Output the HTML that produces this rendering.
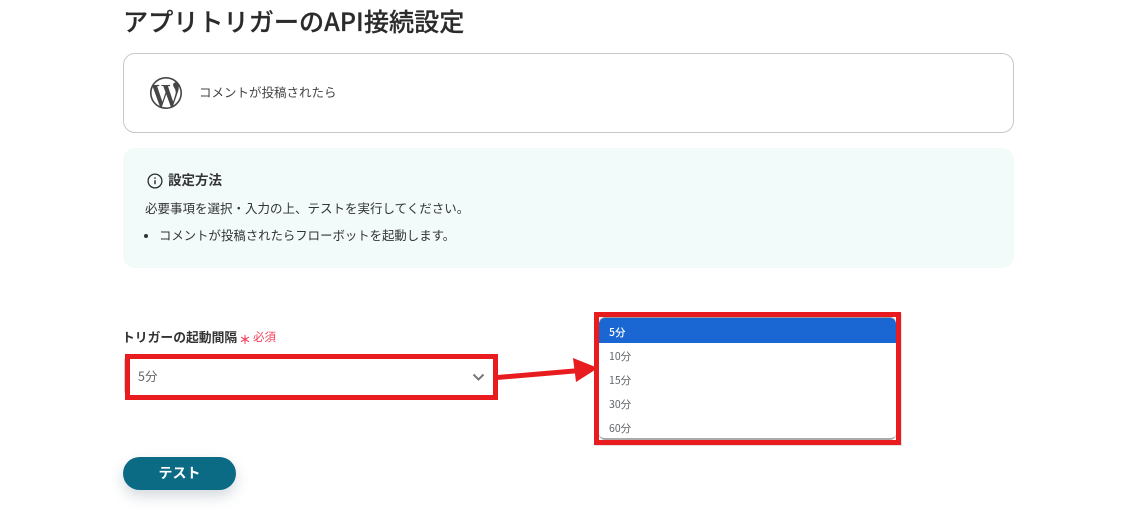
<!DOCTYPE html>
<html lang="ja">
<head>
<meta charset="utf-8">
<style>
html,body{margin:0;padding:0;background:#fff;}
body{width:1126px;height:516px;position:relative;overflow:hidden;font-family:"Liberation Sans","Noto Sans CJK JP",sans-serif;color:#2d2d2d;}
.t{position:absolute;white-space:nowrap;line-height:1;font-family:"Noto Sans CJK JP","Liberation Sans",sans-serif;}
.b{position:absolute;box-sizing:border-box;}
.opt{position:absolute;left:609px;font-size:10.5px;color:#5f6368;}
</style>
</head>
<body>
<div class="t" style="left:123px;top:9px;font-size:25.15px;font-weight:500;color:#2b2b2b;-webkit-text-stroke:.2px #2b2b2b;">アプリトリガーのAPI接続設定</div>

<div class="b" style="left:123px;top:53px;width:891px;height:80px;border:1px solid #c8c8c8;border-radius:12px;"></div>
<svg style="position:absolute;left:150px;top:77px;filter:blur(.3px)" width="32" height="32" viewBox="0 0 24 24"><path fill="#464646" d="M21.469 6.825c.84 1.537 1.318 3.3 1.318 5.175 0 3.979-2.156 7.456-5.363 9.325l3.295-9.527c.615-1.54.82-2.771.82-3.864 0-.405-.026-.78-.07-1.11m-7.981.105c.647-.03 1.232-.105 1.232-.105.582-.075.514-.93-.067-.899 0 0-1.755.135-2.88.135-1.064 0-2.85-.15-2.85-.15-.585-.03-.661.855-.075.885 0 0 .54.061 1.125.09l1.68 4.605-2.37 7.08L5.354 6.9c.649-.03 1.234-.1 1.234-.1.585-.075.516-.93-.065-.896 0 0-1.746.138-2.874.138-.2 0-.438-.008-.69-.015C4.911 3.15 8.235 1.215 12 1.215c2.809 0 5.365 1.072 7.286 2.833-.046-.003-.091-.009-.141-.009-1.06 0-1.812.923-1.812 1.914 0 .89.513 1.643 1.06 2.531.411.72.89 1.643.89 2.977 0 .915-.354 1.994-.821 3.479l-1.075 3.585-3.9-11.61.001.014zM12 22.784c-1.059 0-2.081-.153-3.048-.437l3.237-9.406 3.315 9.087c.024.053.05.101.078.149-1.12.393-2.325.609-3.582.609M1.211 12c0-1.564.336-3.05.935-4.39L7.29 21.709C3.694 19.96 1.212 16.271 1.211 12M12 0C5.385 0 0 5.385 0 12s5.385 12 12 12 12-5.385 12-12S18.615 0 12 0"/></svg>
<div class="t" style="left:199px;top:86px;font-size:12.5px;color:#444;">コメントが投稿されたら</div>

<div class="b" style="left:123px;top:148px;width:891px;height:120px;background:#f2fafa;border-radius:12px;"></div>
<svg style="position:absolute;left:147px;top:173px" width="16" height="16" viewBox="0 0 16 16" fill="none" stroke="#2d2d2d"><circle cx="8" cy="8" r="6.9" stroke-width="1.3"/><path d="M8 7.2v4" stroke-width="1.4"/><path d="M8 4.3v1.5" stroke-width="1.4"/></svg>
<div class="t" style="left:168px;top:173px;font-size:13.5px;font-weight:700;color:#333;">設定方法</div>
<div class="t" style="left:145px;top:202px;font-size:12.5px;color:#333;">必要事項を選択・入力の上、テストを実行してください。</div>
<div class="b" style="left:144px;top:234px;width:4px;height:4px;border-radius:50%;background:#333;"></div>
<div class="t" style="left:159px;top:229px;font-size:12.4px;color:#333;">コメントが投稿されたらフローボットを起動します。</div>

<div class="t" style="left:122px;top:331px;font-size:12.8px;font-weight:700;color:#333;">トリガーの起動間隔</div>
<div class="t" style="left:239px;top:334px;font-size:12px;font-weight:700;color:#f0405a;">＊</div>
<div class="t" style="left:253px;top:332px;font-size:11.5px;color:#f0405a;">必須</div>

<div class="b" style="left:124px;top:355px;width:20px;height:41px;border:1px solid #ccc;border-radius:6px;"></div>
<div class="b" style="left:125px;top:354px;width:373px;height:46px;border:5px solid #e81c1f;background:#fff;"></div>
<div class="t" style="left:138px;top:370px;font-size:12.5px;color:#666;">5分</div>
<svg style="position:absolute;left:472px;top:373px" width="13" height="9" viewBox="0 0 13 9" fill="none"><path d="M1.5 1.5l5 5 5-5" stroke="#777" stroke-width="2"/></svg>

<div class="b" style="left:123px;top:457px;width:113px;height:33px;border-radius:17px;background:#0b6b84;box-shadow:0 6px 14px rgba(60,80,100,.22);"></div>
<div class="t" style="left:123px;top:466px;width:113px;text-align:center;font-size:14px;font-weight:700;color:#fff;">テスト</div>

<svg style="position:absolute;left:490px;top:350px" width="115" height="40" viewBox="0 0 115 40"><path d="M7 27.5L90 20.5" stroke="#e81c1f" stroke-width="5" fill="none"/><path d="M83 8L108 18 86 32Z" fill="#e81c1f"/></svg>

<div class="b" style="left:599px;top:317px;width:297px;height:123px;background:#fff;border-radius:6px;border-top:1.5px solid #999;border-bottom:2px solid #aaa;"></div>
<div class="b" style="left:599px;top:318px;width:297px;height:25px;background:#1a66d2;border-radius:6px 6px 0 0;"></div>
<div class="t opt" style="top:328px;color:#fff;font-weight:500;">5分</div>
<div class="t opt" style="top:352px;">10分</div>
<div class="t opt" style="top:376px;">15分</div>
<div class="t opt" style="top:400px;">30分</div>
<div class="t opt" style="top:424px;">60分</div>
<div class="b" style="left:594px;top:312px;width:307px;height:133px;border:5px solid #e81c1f;box-shadow:1px 1px 0 #e4e4e4;"></div>
</body>
</html>
